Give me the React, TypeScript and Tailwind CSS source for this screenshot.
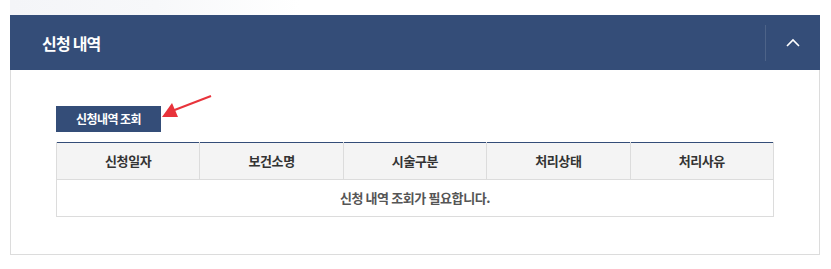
import React from "react";

const columns = ["신청일자", "보건소명", "시술구분", "처리상태", "처리사유"];

export default function App() {
  return (
    <div
      className="relative w-[831px] h-[269px] bg-white overflow-hidden"
      style={{ fontFamily: '"Noto Sans CJK KR", "Noto Sans", sans-serif' }}
    >
      {/* faint shadow left over from the block above */}
      <div className="ml-[10px] h-[15px] w-[290px] bg-gradient-to-r from-[#f4f5f8] via-[#f7f8fa] to-white" />

      <section className="ml-[10px] w-[810px]">
        {/* header */}
        <div className="flex h-[55px] items-center justify-between bg-[#344d78] pl-[32px]">
          <h2 className="text-[16px] font-bold tracking-[-0.8px] text-white">신청 내역</h2>
          <div className="flex h-[36px] items-center border-l border-[#4d6388]">
            <button className="flex h-full w-[54px] items-center justify-center">
              <svg width="14" height="9" viewBox="0 0 14 9" fill="none">
                <path d="M1 8L7 2L13 8" stroke="white" strokeWidth="1.6" />
              </svg>
            </button>
          </div>
        </div>

        {/* body */}
        <div className="border-x border-b border-[#dcdcdc] px-[45px] pt-[36px] pb-[37px]">
          <button className="flex h-[26px] w-[105px] items-center justify-center bg-[#344d78] text-[12px] font-bold tracking-[-0.6px] text-white">
            신청내역 조회
          </button>

          <table className="mt-[10px] w-full table-fixed border-collapse border-t border-[#344d78] text-[13px] tracking-[-0.4px]">
            <thead>
              <tr className="h-[37px] bg-[#f4f4f4]">
                {columns.map((c) => (
                  <th
                    key={c}
                    className="border border-t-0 border-[#dcdcdc] font-bold text-[#333]"
                  >
                    {c}
                  </th>
                ))}
              </tr>
            </thead>
            <tbody>
              <tr className="h-[37px]">
                <td
                  colSpan={5}
                  className="border border-[#dcdcdc] text-center font-bold text-[#555]"
                >
                  신청 내역 조회가 필요합니다.
                </td>
              </tr>
            </tbody>
          </table>
        </div>
      </section>

      {/* red annotation arrow */}
      <svg
        className="absolute left-[158px] top-[92px]"
        width="60"
        height="30"
        viewBox="0 0 60 30"
        fill="none"
      >
        <line x1="53" y1="4" x2="14" y2="19" stroke="#e8333b" strokeWidth="2" />
        <polygon points="4,25 14,11 20,25" fill="#e8333b" />
      </svg>
    </div>
  );
}
